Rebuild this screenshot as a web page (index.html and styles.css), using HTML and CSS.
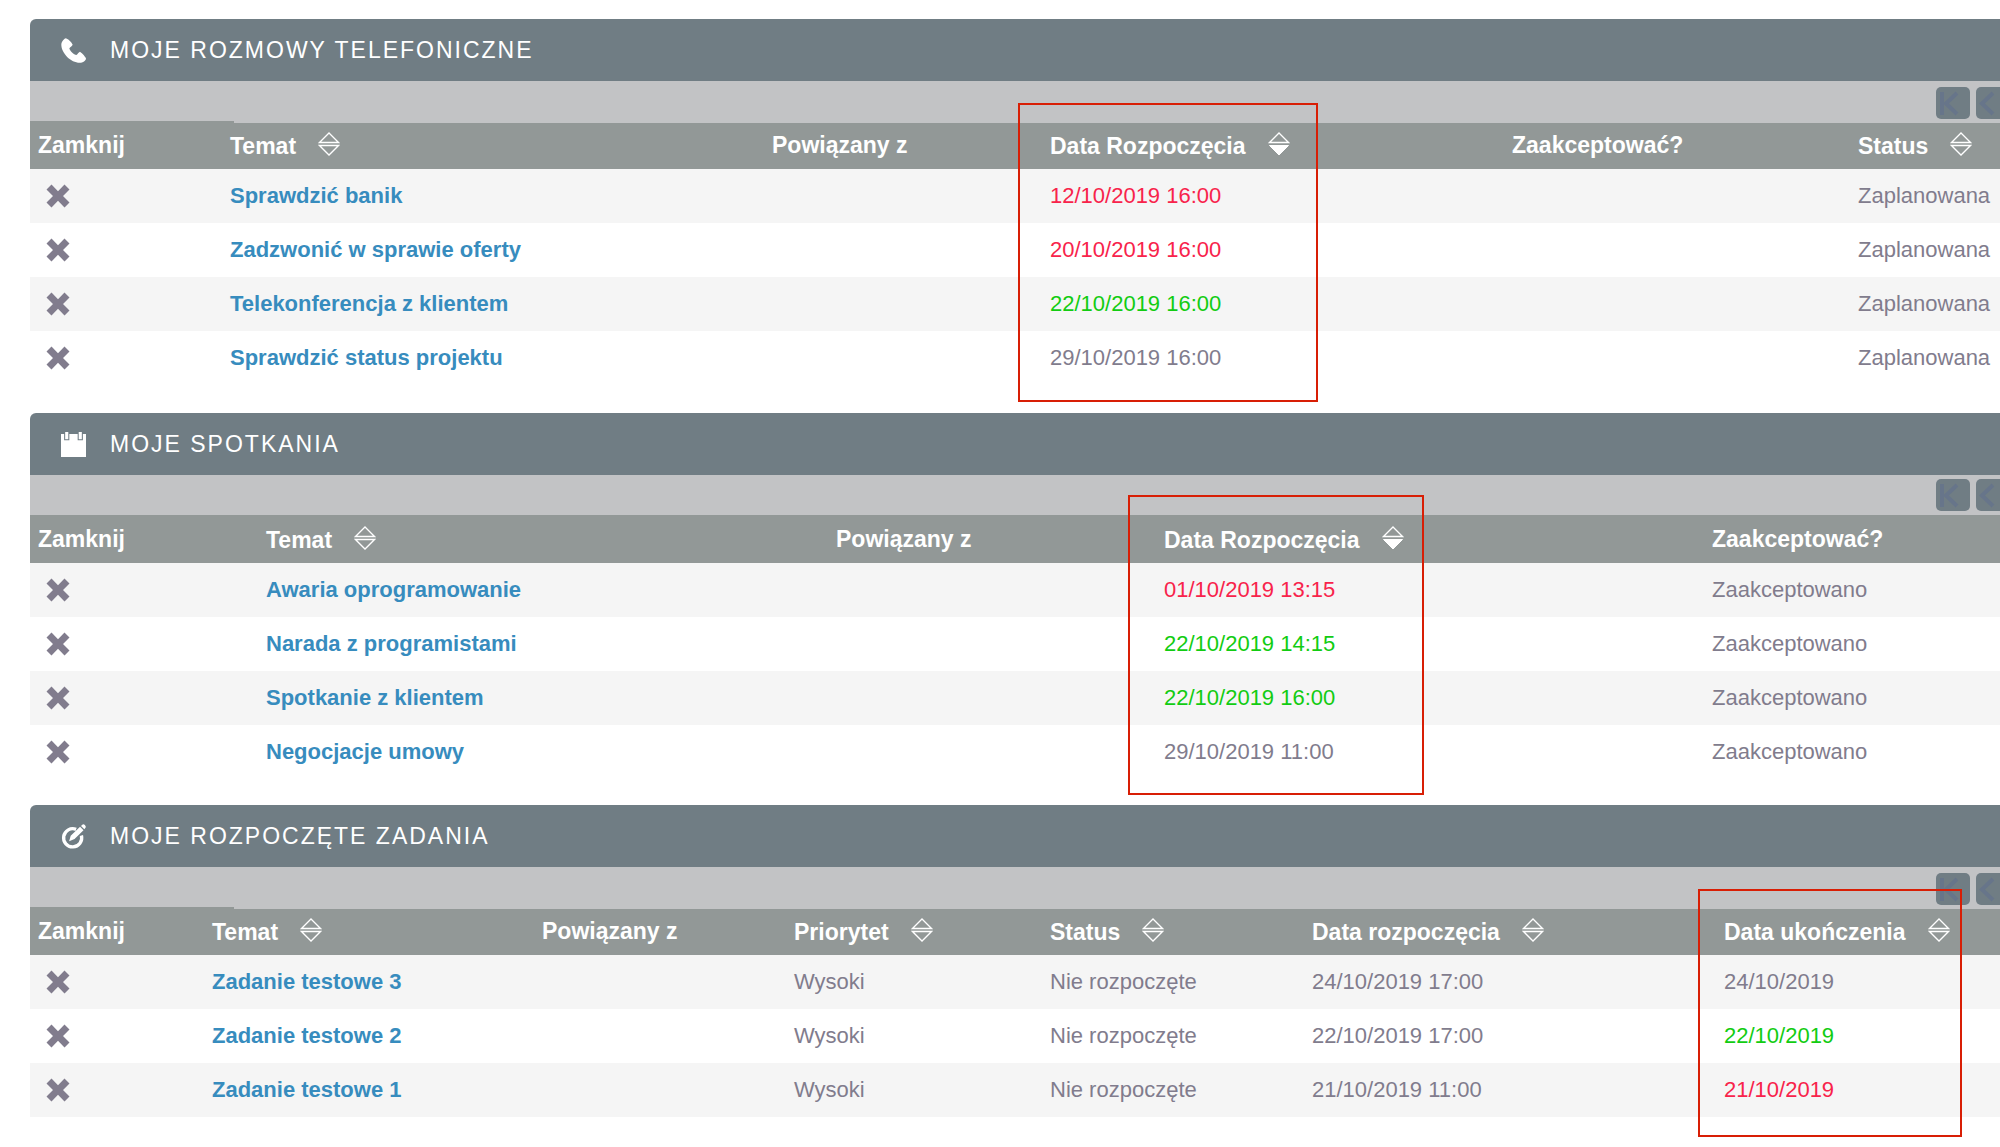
FILE: index.html
```html
<!DOCTYPE html>
<html lang="pl">
<head>
<meta charset="utf-8">
<meta name="viewport" content="width=device-width, initial-scale=1">
<title>Pulpit</title>
<link rel="stylesheet" href="styles.css">
</head>
<body>
<svg class="sprite" aria-hidden="true">
  <symbol id="close" viewBox="0 0 24 24"><path d="M5.500 0.500 12 7.200 18.500 0.500 23.500 5.500 17 12 23.500 18.500 18.500 23.500 12 16.800 5.500 23.500 0.500 18.500 7 12 0.500 5.500Z" fill="currentColor"/></symbol>
  <symbol id="sort" viewBox="0 0 22 24"><path d="M1.500 10.500 11 1 20.500 10.500ZM1.500 13.500H20.500L11 23Z" fill="none" stroke="currentColor" stroke-width="1.300"/></symbol>
  <symbol id="sort-desc" viewBox="0 0 22 24"><path d="M1.500 10.500 11 1 20.500 10.500Z" fill="none" stroke="currentColor" stroke-width="1.300"/><path d="M1.500 13.500H20.500L11 23Z" fill="currentColor" stroke="currentColor"/></symbol>
  <symbol id="first" viewBox="0 0 34 32"><path d="M6 5V28M21 6 10 16.500 21 27" fill="none" stroke="currentColor" stroke-width="4"/></symbol>
  <symbol id="prev" viewBox="0 0 34 32"><path d="M17 6 6 16.500 17 27" fill="none" stroke="currentColor" stroke-width="4"/></symbol>
</svg>
<main class="dashboard">

  <section class="panel">
    <header class="panel-head">
      <svg class="panel-icon" viewBox="0 0 24 24" aria-hidden="true"><path d="M4.500 0.300C3.600 0.300 0.300 3.200 0.300 6.500 0.300 14.500 9.500 23.800 18 23.800 21 23.800 24 21.200 24 19.800 24 18.800 20.500 14.600 18.200 13.200 16.600 13.900 16.200 15.600 14.800 16.300 12.500 16 8.300 12 8 10 8.500 8.600 10.700 8.200 11.200 6.500 10.200 4 6 0.300 4.500 0.300Z" fill="currentColor"/></svg>
      <h2 class="panel-title">MOJE ROZMOWY TELEFONICZNE</h2>
    </header>
    <div class="strip"><div class="pager">
      <button class="page-btn" type="button" aria-label="Początek"><svg><use href="#first"/></svg></button>
      <button class="page-btn" type="button" aria-label="Wstecz"><svg><use href="#prev"/></svg></button>
    </div></div>
    <table class="list calls">
      <colgroup><col><col><col><col><col><col></colgroup>
      <thead><tr>
        <th>Zamknij</th>
        <th>Temat<button class="sort" type="button" aria-label="Sortuj"><svg><use href="#sort"/></svg></button></th>
        <th>Powiązany z</th>
        <th>Data Rozpoczęcia<button class="sort" type="button" aria-label="Sortuj"><svg><use href="#sort-desc"/></svg></button></th>
        <th>Zaakceptować?</th>
        <th>Status<button class="sort" type="button" aria-label="Sortuj"><svg><use href="#sort"/></svg></button></th>
      </tr></thead>
      <tbody>
        <tr><td><button class="close" type="button" aria-label="Zamknij"><svg><use href="#close"/></svg></button></td><td><a href="#">Sprawdzić banik</a></td><td></td><td class="overdue">12/10/2019 16:00</td><td></td><td>Zaplanowana</td></tr>
        <tr><td><button class="close" type="button" aria-label="Zamknij"><svg><use href="#close"/></svg></button></td><td><a href="#">Zadzwonić w sprawie oferty</a></td><td></td><td class="overdue">20/10/2019 16:00</td><td></td><td>Zaplanowana</td></tr>
        <tr><td><button class="close" type="button" aria-label="Zamknij"><svg><use href="#close"/></svg></button></td><td><a href="#">Telekonferencja z klientem</a></td><td></td><td class="today">22/10/2019 16:00</td><td></td><td>Zaplanowana</td></tr>
        <tr><td><button class="close" type="button" aria-label="Zamknij"><svg><use href="#close"/></svg></button></td><td><a href="#">Sprawdzić status projektu</a></td><td></td><td>29/10/2019 16:00</td><td></td><td>Zaplanowana</td></tr>
      </tbody>
    </table>
    <div class="marker marker-calls"></div>
  </section>

  <section class="panel panel-compact">
    <header class="panel-head">
      <svg class="panel-icon" viewBox="0 0 24 24" aria-hidden="true"><path d="M0 2H3V8H8V2H16V8H21V2H24V24H0ZM4 0H7V7H4ZM17 0H20V7H17Z" fill="currentColor"/></svg>
      <h2 class="panel-title">MOJE SPOTKANIA</h2>
    </header>
    <div class="strip"><div class="pager">
      <button class="page-btn" type="button" aria-label="Początek"><svg><use href="#first"/></svg></button>
      <button class="page-btn" type="button" aria-label="Wstecz"><svg><use href="#prev"/></svg></button>
    </div></div>
    <table class="list meetings">
      <colgroup><col><col><col><col><col></colgroup>
      <thead><tr>
        <th>Zamknij</th>
        <th>Temat<button class="sort" type="button" aria-label="Sortuj"><svg><use href="#sort"/></svg></button></th>
        <th>Powiązany z</th>
        <th>Data Rozpoczęcia<button class="sort" type="button" aria-label="Sortuj"><svg><use href="#sort-desc"/></svg></button></th>
        <th>Zaakceptować?</th>
      </tr></thead>
      <tbody>
        <tr><td><button class="close" type="button" aria-label="Zamknij"><svg><use href="#close"/></svg></button></td><td><a href="#">Awaria oprogramowanie</a></td><td></td><td class="overdue">01/10/2019 13:15</td><td>Zaakceptowano</td></tr>
        <tr><td><button class="close" type="button" aria-label="Zamknij"><svg><use href="#close"/></svg></button></td><td><a href="#">Narada z programistami</a></td><td></td><td class="today">22/10/2019 14:15</td><td>Zaakceptowano</td></tr>
        <tr><td><button class="close" type="button" aria-label="Zamknij"><svg><use href="#close"/></svg></button></td><td><a href="#">Spotkanie z klientem</a></td><td></td><td class="today">22/10/2019 16:00</td><td>Zaakceptowano</td></tr>
        <tr><td><button class="close" type="button" aria-label="Zamknij"><svg><use href="#close"/></svg></button></td><td><a href="#">Negocjacje umowy</a></td><td></td><td>29/10/2019 11:00</td><td>Zaakceptowano</td></tr>
      </tbody>
    </table>
    <div class="marker marker-meetings"></div>
  </section>

  <section class="panel">
    <header class="panel-head">
      <svg class="panel-icon" viewBox="0 0 24 24" aria-hidden="true"><path d="M14.500 5.200A8.700 8.700 0 1 0 19.600 11" fill="none" stroke="currentColor" stroke-width="3.200"/><path d="M7.800 16.500 9.300 11.300 18.300 2.700 21.600 6 13 14.500ZM19.200 1.800 20.400 0.600Q21.600-0.300 22.900 0.900 24.300 2.300 23.500 3.700L22.400 5Z" fill="currentColor"/></svg>
      <h2 class="panel-title">MOJE ROZPOCZĘTE ZADANIA</h2>
    </header>
    <div class="strip"><div class="pager">
      <button class="page-btn" type="button" aria-label="Początek"><svg><use href="#first"/></svg></button>
      <button class="page-btn" type="button" aria-label="Wstecz"><svg><use href="#prev"/></svg></button>
    </div></div>
    <table class="list tasks">
      <colgroup><col><col><col><col><col><col><col></colgroup>
      <thead><tr>
        <th>Zamknij</th>
        <th>Temat<button class="sort" type="button" aria-label="Sortuj"><svg><use href="#sort"/></svg></button></th>
        <th>Powiązany z</th>
        <th>Priorytet<button class="sort" type="button" aria-label="Sortuj"><svg><use href="#sort"/></svg></button></th>
        <th>Status<button class="sort" type="button" aria-label="Sortuj"><svg><use href="#sort"/></svg></button></th>
        <th>Data rozpoczęcia<button class="sort" type="button" aria-label="Sortuj"><svg><use href="#sort"/></svg></button></th>
        <th>Data ukończenia<button class="sort" type="button" aria-label="Sortuj"><svg><use href="#sort"/></svg></button></th>
      </tr></thead>
      <tbody>
        <tr><td><button class="close" type="button" aria-label="Zamknij"><svg><use href="#close"/></svg></button></td><td><a href="#">Zadanie testowe 3</a></td><td></td><td>Wysoki</td><td>Nie rozpoczęte</td><td>24/10/2019 17:00</td><td>24/10/2019</td></tr>
        <tr><td><button class="close" type="button" aria-label="Zamknij"><svg><use href="#close"/></svg></button></td><td><a href="#">Zadanie testowe 2</a></td><td></td><td>Wysoki</td><td>Nie rozpoczęte</td><td>22/10/2019 17:00</td><td class="today">22/10/2019</td></tr>
        <tr><td><button class="close" type="button" aria-label="Zamknij"><svg><use href="#close"/></svg></button></td><td><a href="#">Zadanie testowe 1</a></td><td></td><td>Wysoki</td><td>Nie rozpoczęte</td><td>21/10/2019 11:00</td><td class="overdue">21/10/2019</td></tr>
      </tbody>
    </table>
    <div class="marker marker-tasks"></div>
  </section>

</main>
</body>
</html>
```
FILE: styles.css
```css
* { box-sizing: border-box; }

body {
  margin: 0;
  background: #fff;
  color: #817c8d;
  font: 22px/26px "Liberation Sans", Arial, sans-serif;
  overflow-x: hidden;
}

button {
  border: 0;
  padding: 0;
  background: none;
  color: inherit;
  cursor: pointer;
}

svg { display: block; }
.sprite { position: absolute; width: 0; height: 0; }

/* The panels run on past the right edge of the window. */
.dashboard {
  margin: 0 -30px 0 30px;
  padding-top: 19px;
}

.panel { position: relative; margin-bottom: 28px; }
.panel-compact { margin-bottom: 26px; }

.panel-head {
  display: flex;
  align-items: center;
  gap: 24px;
  height: 62px;
  padding-left: 31px;
  border-radius: 6px 6px 0 0;
  background: #707d84;
  color: #fff;
}

.panel-icon { width: 25px; height: 25px; }

.panel-title {
  margin: 0;
  font-size: 23px;
  font-weight: 400;
  letter-spacing: 2px;
}

.strip { height: 40px; background: #c2c3c5; }

/* The pager is a little taller than its strip and laps over the table head. */
.pager {
  position: relative;
  display: flex;
  justify-content: flex-end;
  gap: 6px;
  margin-left: 204px;
  padding: 6px 20px 4px 0;
  background: #c2c3c5;
}
.panel-compact .pager { padding-top: 4px; }

.page-btn {
  width: 34px;
  height: 32px;
  border-radius: 5px;
  background: #707d84;
  color: #67758a;
}
.page-btn svg { width: 34px; height: 32px; }

.list {
  width: 100%;
  table-layout: fixed;
  border-collapse: collapse;
}

.list th,
.list td {
  padding: 0 8px;
  text-align: left;
  white-space: nowrap;
}

.list th {
  height: 48px;
  background: #929897;
  color: #fff;
  font-size: 23px;
}

.list td { height: 54px; }
.list tbody tr:nth-child(odd) { background: #f5f5f5; }
.list a { color: #378cbe; font-weight: 700; text-decoration: none; }
.list .overdue { color: #f8234b; }
.list .today { color: #12cc12; }

.sort { margin-left: 22px; vertical-align: -2px; }
.sort svg { width: 22px; height: 24px; }

.close { display: block; margin-left: 8px; color: #817c8d; }
.close svg { width: 24px; height: 24px; }

.calls col:nth-child(1) { width: 9.6%; }
.calls col:nth-child(2) { width: 27.1%; }
.calls col:nth-child(3) { width: 13.9%; }
.calls col:nth-child(4) { width: 23.1%; }
.calls col:nth-child(5) { width: 17.3%; }
.calls col:nth-child(6) { width: 9%; }

.meetings col:nth-child(1) { width: 11.4%; }
.meetings col:nth-child(2) { width: 28.5%; }
.meetings col:nth-child(3) { width: 16.4%; }
.meetings col:nth-child(4) { width: 27.4%; }
.meetings col:nth-child(5) { width: 16.3%; }

.tasks col:nth-child(1) { width: 8.7%; }
.tasks col:nth-child(2) { width: 16.5%; }
.tasks col:nth-child(3) { width: 12.6%; }
.tasks col:nth-child(4) { width: 12.8%; }
.tasks col:nth-child(5) { width: 13.1%; }
.tasks col:nth-child(6) { width: 20.6%; }
.tasks col:nth-child(7) { width: 15.7%; }

/* Red frames drawn over the date columns. */
.marker {
  position: absolute;
  top: 84px;
  bottom: -17px;
  border: 2px solid #d81e05;
  pointer-events: none;
}
.marker-calls { left: 49.4%; width: 15%; }
.marker-meetings { left: 54.9%; width: 14.8%; top: 82px; bottom: -16px; }
.marker-tasks { left: 83.4%; width: 13.2%; bottom: -20px; }
```
